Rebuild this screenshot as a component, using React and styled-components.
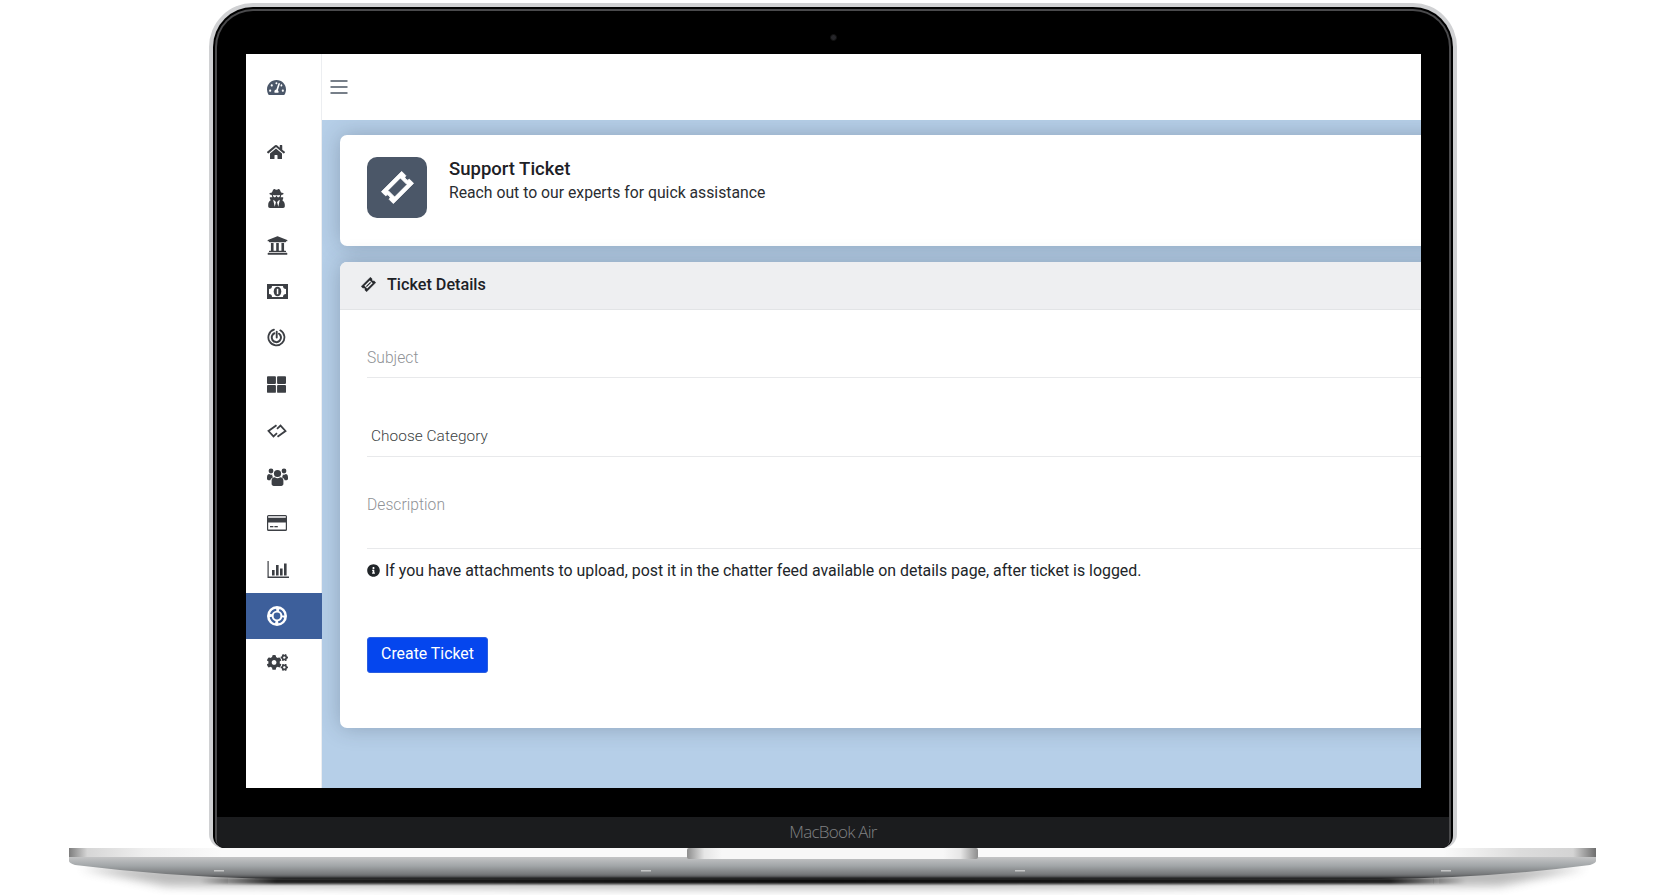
import React from "react";
import styled, { createGlobalStyle } from "styled-components";
import {
  FaTachometerAlt, FaHome, FaUserSecret, FaUniversity, FaThLarge, FaCogs, FaInfoCircle,
} from "react-icons/fa";

const Global = createGlobalStyle`
  html, body { margin: 0; padding: 0; background: #fff; height: 100%; overflow: hidden; }
  * { box-sizing: border-box; }
  body { font-family: "Roboto", "Liberation Sans", sans-serif; }
`;

const Page = styled.div`
  width: 1666px; height: 895px; display: flex; flex-direction: column; align-items: center;
  padding-top: 3px; overflow: hidden; background: #fff;
`;
const Lid = styled.div`
  width: 1248px; height: 845px; flex: none; background: #d0d1d3;
  border-radius: 44px 44px 14px 14px; padding: 4px 4px 0; position: relative; z-index: 1;
`;
const Bezel = styled.div`
  height: 100%; background: #000; border-radius: 40px 40px 12px 12px; padding: 2px 2px 0;
`;
const BezelLine = styled.div`
  height: 100%; background: #4a4a4c; border-radius: 38px 38px 10px 10px; padding: 2px 2px 0;
`;
const BezelInner = styled.div`
  height: 100%; background: #000; border-radius: 36px 36px 8px 8px; display: flex; flex-direction: column;
  overflow: hidden;
`;
const CameraBar = styled.div`
  height: 43px; flex: none; display: flex; align-items: center; justify-content: center; padding-top: 9px;
`;
const Camera = styled.span`
  width: 7px; height: 7px; border-radius: 50%; background: #26262a; border: 1.5px solid #111;
`;
const Screen = styled.div`
  width: 1175px; height: 734px; flex: none; margin-left: 29px; background: #fff; display: flex; overflow: hidden;
`;
const Chin = styled.div`
  margin-top: 29px; flex: 1; background: #1b1c1e; display: flex; justify-content: center; padding-top: 4px;
`;
const ChinLabel = styled.span`
  font-family: "Open Sans", sans-serif; font-weight: 300; font-size: 17px; letter-spacing: -0.75px; line-height: 22px; color: #808183;
`;
const Sidebar = styled.nav`
  width: 76px; flex: none; background: #fff; border-right: 1px solid #eceef1; padding-left: 21px;
`;
const LogoCell = styled.div`
  height: 66px; display: flex; align-items: center; color: #4b5769; font-size: 19px;
`;
const NavList = styled.div`
  margin-top: 9.1px;
`;
const NavItem = styled.div`
  height: 46.4px; margin-left: -21px; margin-right: -1px; padding-left: 21px; display: flex; align-items: center;
  font-size: ${(p) => p.$size || 20}px;
  color: ${(p) => (p.$active ? "#fff" : "#3c3f44")};
  background: ${(p) => (p.$active ? "#3d5f9b" : "transparent")};
`;
const Main = styled.div`
  flex: 1; min-width: 0; display: flex; flex-direction: column;
`;
const Topbar = styled.header`
  height: 66px; flex: none; background: #fff; display: flex; align-items: center; padding-left: 8px; color: #4b5563;
`;
const Content = styled.main`
  flex: 1; background: #b6cfe8; padding: 15px 0 0 18px; overflow: hidden;
`;
const Card = styled.section`
  width: 1110px; background: #fff; border-radius: 7px; box-shadow: 0 0 22px rgba(40, 50, 70, 0.28);
`;
const HeroCard = styled(Card)`
  height: 111px; display: flex; align-items: flex-start; padding: 22px 27px; gap: 22px;
`;
const HeroIcon = styled.div`
  width: 60px; height: 61px; flex: none; border-radius: 10px; background: #4b5768; display: flex; align-items: center; justify-content: center;
`;
const HeroText = styled.div`
  display: flex; flex-direction: column;
`;
const HeroTitle = styled.h1`
  margin: 0; font-size: 18.5px; line-height: 24px; font-weight: 500; color: #1d2126;
`;
const HeroSub = styled.p`
  margin: 0; font-size: 15.75px; line-height: 24px; font-weight: 400; color: #2a2d31;
`;
const FormCard = styled(Card)`
  height: 466px; margin-top: 16px; overflow: hidden;
`;
const CardHead = styled.div`
  height: 48px; background: #eeeff1; border-bottom: 1px solid #e2e4e6; display: flex; align-items: center; padding: 0 0 2px 21px; gap: 11px;
  color: #1d2126; font-size: 16.2px; font-weight: 500;
`;
const FormBody = styled.div`
  padding: 0 0 0 27px; display: flex; flex-direction: column; align-items: flex-start;
`;
const Field = styled.div`
  width: 100%; height: ${(p) => p.$h}px; border-bottom: 1px solid #e8e9eb; display: flex; align-items: flex-start;
  padding-top: ${(p) => p.$pt}px; padding-left: ${(p) => p.$pl || 0}px; font-size: ${(p) => p.$fs}px; line-height: 24px;
  font-weight: 300; letter-spacing: 0.05px;
  color: ${(p) => (p.$dark ? "#3c3f43" : "#8f9296")};
`;
const Notice = styled.p`
  margin: 9.5px 0 0; display: flex; align-items: center; gap: 5px; font-size: 15.9px; line-height: 24px; color: #212529;
  svg { font-size: 13px; color: #212529; }
`;
const Submit = styled.button`
  margin-top: 54px; width: 121px; height: 36.5px; padding: 0 0 1px; border: 1px solid #2a5ee0; border-radius: 3px; background: #0546ee; color: #fff;
  font-family: inherit; font-size: 15.85px; line-height: 24px;
`;
const Base = styled.svg`
  display: block; flex: none; width: 1666px; height: 47px;
`;

const Radar = () => (
  <svg width="19" height="19" viewBox="0 0 18 18" fill="none" stroke="currentColor" strokeWidth="1.7" strokeLinecap="round">
    <path d="M6.6 1.6A7.6 7.6 0 1 0 12.6 2.2" />
    <path d="M7 5a4.4 4.4 0 1 0 4.4.4" strokeWidth="1.9" />
    <path d="M9.2 3.6V9" strokeWidth="1.8" />
  </svg>
);
const LinkDiamond = () => (
  <svg width="20" height="14" viewBox="0 0 20 14" fill="none" stroke="currentColor" strokeWidth="1.8">
    <path d="M9.5 1.2 1.5 7l5 5.4L10 9.2" />
    <path d="M10.5 12.8 18.5 7l-5-5.4L10 4.8" />
  </svg>
);
const ChartLines = () => (
  <svg width="22" height="17" viewBox="0 0 22 17" fill="currentColor">
    <path d="M0.5 0h1.2v15.5H22V17H.5z" />
    <path d="M5 9h2.6v5.5H5zM9 4h2.6v10.5H9zM13 7.5h2.6v7H13zM17 2.5h2.6v12H17z" />
  </svg>
);
const MenuIcon = () => (
  <svg width="18" height="14" viewBox="0 0 18 14" fill="none" stroke="currentColor" strokeWidth="1.3">
    <path d="M0.5 1h17M0.5 7h17M0.5 13h17" />
  </svg>
);
const Ticket = ({ size, color, slit }) => (
  <svg width={size} height={size} viewBox="-15 -15 30 30" fill={color}>
    <g transform="rotate(-45)">
      <path
        fillRule="evenodd"
        stroke={color}
        strokeWidth="0.8"
        strokeLinejoin="round"
        d="M-13 -7.6H13V-2.4A2.4 2.4 0 0 0 13 2.4V7.6H-13V2.4A2.4 2.4 0 0 0 -13 -2.4ZM-8 -4.3V4.3H8V-4.3Z"
      />
      {slit && <rect x="-6" y="-1.2" width="12" height="2.4" />}
    </g>
  </svg>
);
const Money = () => (
  <svg width="21" height="15" viewBox="0 0 21 15">
    <path fill="currentColor" fillRule="evenodd" d="M0 0h21v15H0zM2 2v11h17V2z" />
    <path fill="currentColor" d="M2 2h3a3 3 0 0 1-3 3zM19 2v3a3 3 0 0 1-3-3zM2 13v-3a3 3 0 0 1 3 3zM19 13h-3a3 3 0 0 1 3-3z" />
    <ellipse cx="10.5" cy="7.5" rx="3.8" ry="4.8" fill="currentColor" />
    <rect x="9.8" y="4.8" width="1.5" height="5.4" fill="#fff" />
  </svg>
);
const Users = () => (
  <svg width="21" height="18" viewBox="0 0 21 18" fill="currentColor">
    <circle cx="10.5" cy="5.5" r="3.6" />
    <path d="M4.6 12.5c0-2.2 1.7-3.3 3.2-3.3.8.6 1.7 1 2.7 1s1.9-.4 2.7-1c1.5 0 3.2 1.1 3.2 3.3v3.3c0 1.3-.9 2.2-2.2 2.2H6.8c-1.3 0-2.2-.9-2.2-2.2z" />
    <circle cx="4" cy="3" r="2.4" />
    <circle cx="17" cy="3" r="2.4" />
    <path d="M0 9.2C0 7 1.2 6 2.2 6c.5.4 1.1.7 1.8.7.4 0 .8-.1 1.2-.3-.1 1 .3 2 1 2.8-1.4.6-2.6 1.6-2.9 3H1.4C.6 12.2 0 11.6 0 10.8zM21 9.2C21 7 19.8 6 18.8 6c-.5.4-1.1.7-1.8.7-.4 0-.8-.1-1.2-.3.1 1-.3 2-1 2.8 1.4.6 2.6 1.6 2.9 3h1.9c.8 0 1.4-.6 1.4-1.4z" />
  </svg>
);
const CardIcon = () => (
  <svg width="20" height="16" viewBox="0 0 20 16">
    <path fill="currentColor" fillRule="evenodd" d="M1.5 0h17A1.5 1.5 0 0 1 20 1.5v13a1.5 1.5 0 0 1-1.5 1.5h-17A1.5 1.5 0 0 1 0 14.5v-13A1.5 1.5 0 0 1 1.5 0zM1.2 1.2v1.6h17.6V1.2zM1.2 7.5v7h17.6v-7z" />
    <rect x="3" y="11" width="3.4" height="1.3" fill="currentColor" />
    <rect x="7.4" y="11" width="3.4" height="1.3" fill="currentColor" />
  </svg>
);
const Ring = () => (
  <svg width="20" height="20" viewBox="0 0 20 20">
    <circle cx="10" cy="10" r="10" fill="#fff" />
    <circle cx="10" cy="10" r="6.4" fill="none" stroke="#3d5f9b" strokeWidth="2" strokeDasharray="7 3.05" strokeDashoffset="-1.5" />
    <circle cx="10" cy="10" r="3.4" fill="#3d5f9b" />
  </svg>
);

const items = [
  { key: "home", node: <FaHome />, size: 18 },
  { key: "spy", node: <FaUserSecret />, size: 19 },
  { key: "bank", node: <FaUniversity />, size: 21 },
  { key: "money", node: <Money /> },
  { key: "radar", node: <Radar /> },
  { key: "grid", node: <FaThLarge />, size: 19 },
  { key: "link", node: <LinkDiamond /> },
  { key: "users", node: <Users /> },
  { key: "card", node: <CardIcon /> },
  { key: "chart", node: <ChartLines /> },
  { key: "help", node: <Ring />, active: true },
  { key: "cogs", node: <FaCogs />, size: 21 },
];

const App = () => (
  <Page>
    <Global />
    <Lid>
      <Bezel>
        <BezelLine>
          <BezelInner>
            <CameraBar><Camera /></CameraBar>
            <Screen>
              <Sidebar>
                <LogoCell><FaTachometerAlt /></LogoCell>
                <NavList>
                  {items.map((it) => (
                    <NavItem key={it.key} $size={it.size} $active={it.active}>{it.node}</NavItem>
                  ))}
                </NavList>
              </Sidebar>
              <Main>
                <Topbar><MenuIcon /></Topbar>
                <Content>
                  <HeroCard>
                    <HeroIcon><Ticket size={33} color="#fff" /></HeroIcon>
                    <HeroText>
                      <HeroTitle>Support Ticket</HeroTitle>
                      <HeroSub>Reach out to our experts for quick assistance</HeroSub>
                    </HeroText>
                  </HeroCard>
                  <FormCard>
                    <CardHead><Ticket size={15} color="#25282c" slit />Ticket Details</CardHead>
                    <FormBody>
                      <Field $h={68} $pt={36} $fs={15.6}>Subject</Field>
                      <Field $h={79} $pt={46} $pl={4} $fs={15.4} $dark>Choose Category</Field>
                      <Field $h={92} $pt={36} $fs={15.6}>Description</Field>
                      <Notice><FaInfoCircle />If you have attachments to upload, post it in the chatter feed available on details page, after ticket is logged.</Notice>
                      <Submit type="button">Create Ticket</Submit>
                    </FormBody>
                  </FormCard>
                </Content>
              </Main>
            </Screen>
            <Chin><ChinLabel>MacBook Air</ChinLabel></Chin>
          </BezelInner>
        </BezelLine>
      </Bezel>
    </Lid>
    <Base viewBox="0 0 1666 47">
      <defs>
        <linearGradient id="lip" x1="0" x2="1" y1="0" y2="0">
          <stop offset="0" stopColor="#7d7d7d" />
          <stop offset="0.012" stopColor="#d6d6d6" />
          <stop offset="0.05" stopColor="#efefef" />
          <stop offset="0.1" stopColor="#fafafa" />
          <stop offset="0.9" stopColor="#fafafa" />
          <stop offset="0.95" stopColor="#dcdcdc" />
          <stop offset="0.985" stopColor="#d4d4d4" />
          <stop offset="1" stopColor="#6e6e6e" />
        </linearGradient>
        <linearGradient id="body" x1="0" x2="0" y1="0" y2="1">
          <stop offset="0" stopColor="#c4c5c6" />
          <stop offset="0.4" stopColor="#a2a6a8" />
          <stop offset="0.78" stopColor="#77797b" />
          <stop offset="1" stopColor="#3e3f41" />
        </linearGradient>
        <linearGradient id="band" x1="0" x2="1" y1="0" y2="0">
          <stop offset="0" stopColor="#111" stopOpacity="0" />
          <stop offset="0.06" stopColor="#111" stopOpacity="0.9" />
          <stop offset="0.5" stopColor="#0c0c0c" stopOpacity="1" />
          <stop offset="0.94" stopColor="#111" stopOpacity="0.9" />
          <stop offset="1" stopColor="#111" stopOpacity="0" />
        </linearGradient>
        <linearGradient id="notch" x1="0" x2="1" y1="0" y2="0">
          <stop offset="0" stopColor="#8d8d8d" />
          <stop offset="0.06" stopColor="#e6e6e6" />
          <stop offset="0.12" stopColor="#f7f7f7" />
          <stop offset="0.88" stopColor="#f7f7f7" />
          <stop offset="0.94" stopColor="#e6e6e6" />
          <stop offset="1" stopColor="#8d8d8d" />
        </linearGradient>
        <filter id="soft" x="-5%" y="-200%" width="110%" height="500%">
          <feGaussianBlur stdDeviation="5" />
        </filter>
        <filter id="tight" x="-2%" y="-200%" width="104%" height="500%">
          <feGaussianBlur stdDeviation="0.9" />
        </filter>
      </defs>
      <path d="M80 20H1586L1500 38Q833 44 166 38z" fill="#666" opacity="0.45" filter="url(#soft)" />
      <path d="M69 9H1596V13Q1596 15 1590 17Q1490 30 1380 31H285Q180 30 75 17Q69 15 69 13z" fill="url(#body)" />
      <rect x="200" y="30" width="1266" height="6" fill="url(#band)" filter="url(#tight)" />
      <rect x="69" y="0" width="1527" height="9" fill="url(#lip)" />
      <rect x="687" y="0" width="291" height="11" rx="2" fill="url(#notch)" />
      <rect x="214" y="22" width="10" height="1.5" fill="#e0e0e0" opacity="0.7" />
      <rect x="641" y="22" width="10" height="1.5" fill="#e0e0e0" opacity="0.7" />
      <rect x="1015" y="22" width="10" height="1.5" fill="#e0e0e0" opacity="0.7" />
      <rect x="1441" y="22" width="10" height="1.5" fill="#e0e0e0" opacity="0.7" />
    </Base>
  </Page>
);

export default App;
